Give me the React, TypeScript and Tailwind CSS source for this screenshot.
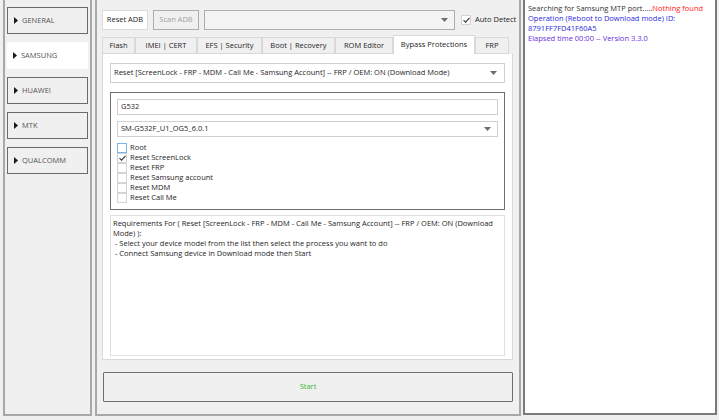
import React from "react";

const FONT = { fontFamily: '"Open Sans", "Liberation Sans", sans-serif' };

const SIDE_ITEMS = ["GENERAL", "SAMSUNG", "HUAWEI", "MTK", "QUALCOMM"];

const TABS: { label: string; w: string }[] = [
  { label: "Flash", w: "w-[33px]" },
  { label: "IMEI | CERT", w: "w-[62px]" },
  { label: "EFS | Security", w: "w-[65px]" },
  { label: "Boot | Recovery", w: "w-[73px]" },
  { label: "ROM Editor", w: "w-[58px]" },
  { label: "Bypass Protections", w: "w-[82px]" },
  { label: "FRP", w: "w-[34px]" },
];

const OPTIONS = [
  { label: "Root", checked: false, hover: true },
  { label: "Reset ScreenLock", checked: true },
  { label: "Reset FRP", checked: false },
  { label: "Reset Samsung account", checked: false },
  { label: "Reset MDM", checked: false },
  { label: "Reset Call Me", checked: false },
];

function Arrow() {
  return (
    <svg width="7" height="4" viewBox="0 0 7 4" className="shrink-0">
      <path d="M0 0h7L3.5 4z" fill="#6d6d6d" />
    </svg>
  );
}

function Check({ checked, hover }: { checked: boolean; hover?: boolean }) {
  return (
    <span
      className={
        "flex h-[10px] w-[10px] shrink-0 items-center justify-center border bg-white " +
        (hover ? "border-[#7eb4ea] bg-[#eaf4fd]" : "border-[#d4d4d4]")
      }
    >
      {checked && (
        <svg width="7" height="6" viewBox="0 0 7 6">
          <path d="M0.5 3.2 2.6 5.2 6.5 0.8" fill="none" stroke="#333" strokeWidth="1.1" />
        </svg>
      )}
    </span>
  );
}

export default function App() {
  return (
    <div className="flex h-[420px] w-[719px] overflow-hidden bg-[#f0f0f0] pl-[3px] text-[#1e1e1e]" style={FONT}>
      {/* left menu */}
      <div className="flex h-[416px] w-[89px] shrink-0 flex-col gap-[8px] border-2 border-t-0 border-[#a8a8a8] px-[2px] pt-[7px]">
        {SIDE_ITEMS.map((item) => (
          <div
            key={item}
            className={
              "flex h-[27px] items-center gap-[4px] pl-[6px] text-[7.5px] " +
              (item === "SAMSUNG" ? "bg-white" : "border border-[#6a6a6a]")
            }
          >
            <svg width="4" height="7" viewBox="0 0 4 7">
              <path d="M0 0l4 3.5L0 7z" fill="#1a1a1a" />
            </svg>
            <span className="text-[#555]">{item}</span>
          </div>
        ))}
      </div>

      {/* middle */}
      <div className="ml-[3px] flex h-[416px] w-[426px] shrink-0 flex-col border-2 border-t-0 border-[#a8a8a8] pl-[5px] pr-[5px] pt-[10px]">
        <div className="flex h-[20px] items-center whitespace-nowrap text-[7.5px]">
          <div className="flex h-[20px] w-[46px] shrink-0 items-center justify-center border border-[#dcdcdc] bg-white">Reset ADB</div>
          <div className="ml-[5px] flex h-[20px] w-[46px] shrink-0 items-center justify-center border border-[#adadad] text-[#a0a0a0]">Scan ADB</div>
          <div className="ml-[5px] flex h-[20px] w-[251px] shrink-0 items-center justify-end border border-[#adadad] bg-[#f4f4f4] pr-[6px]">
            <Arrow />
          </div>
          <div className="ml-[6px] flex items-center gap-[4px]">
            <Check checked />
            <span>Auto Detect</span>
          </div>
        </div>

        <div className="mt-[5px] flex h-[19px] items-end text-[7.5px]">
          {TABS.map((t) => {
            const active = t.label === "Bypass Protections";
            return (
              <div
                key={t.label}
                className={
                  "flex items-center justify-center whitespace-nowrap border border-[#d9d9d9] " +
                  t.w +
                  (active ? " h-[19px] border-b-0 bg-white" : " h-[17px] bg-[#f0f0f0]")
                }
              >
                {t.label}
              </div>
            );
          })}
        </div>

        <div className="flex h-[306px] w-[411px] flex-col border border-t-0 border-[#d9d9d9] bg-white px-[7px] pt-[9px] text-[7.5px]">
          <div className="flex h-[20px] items-center justify-between border border-[#d0d0d0] bg-white pl-[3px] pr-[7px]">
            <span>Reset [ScreenLock - FRP - MDM - Call Me - Samsung Account] -- FRP / OEM: ON (Download Mode)</span>
            <Arrow />
          </div>

          <div className="mt-[9px] flex h-[118px] flex-col border border-[#6e6e6e] px-[6px] pt-[6px]">
            <div className="flex h-[16px] items-center border border-[#d0d0d0] pl-[3px]">G532</div>
            <div className="mt-[6px] flex h-[16px] items-center justify-between border border-[#d0d0d0] pl-[3px] pr-[6px]">
              <span>SM-G532F_U1_OG5_6.0.1</span>
              <Arrow />
            </div>
            <div className="mt-[6px] flex flex-col">
              {OPTIONS.map((o) => (
                <div key={o.label} className="flex h-[10px] items-center gap-[3px]">
                  <Check checked={o.checked} hover={o.hover} />
                  <span>{o.label}</span>
                </div>
              ))}
            </div>
          </div>

          <div className="mt-[5px] h-[141px] border border-[#e0e0e0] px-[2px] pt-[2px] leading-[10px]">
            <p>Requirements For ( Reset [ScreenLock - FRP - MDM - Call Me - Samsung Account] -- FRP / OEM: ON (Download Mode) ):</p>
            <p>&nbsp;- Select your device model from the list then select the process you want to do</p>
            <p>&nbsp;- Connect Samsung device in Download mode then Start</p>
          </div>
        </div>

        <div className="ml-[1px] mt-[12px] flex h-[30px] w-[410px] items-center justify-center rounded-[1px] border border-[#6e6e6e] text-[7.5px] text-[#3cb43c]">
          Start
        </div>
      </div>

      {/* log */}
      <div className="ml-[2px] h-[415px] w-[194px] shrink-0 border-2 border-t-0 border-[#7a7a7a] bg-white px-[3px] pt-[3px] text-[7.5px] leading-[10px]">
        <p className="text-[#333]">
          Searching for Samsung MTP port.....<span className="text-[#ff2020]">Nothing found</span>
        </p>
        <p className="text-[#2b2be0]">Operation (Reboot to Download mode) ID:</p>
        <p className="text-[#2b2be0]">8791FF7FD41F60A5</p>
        <p className="text-[#6a2ce0]">Elapsed time 00:00 -- Version 3.3.0</p>
      </div>
    </div>
  );
}
